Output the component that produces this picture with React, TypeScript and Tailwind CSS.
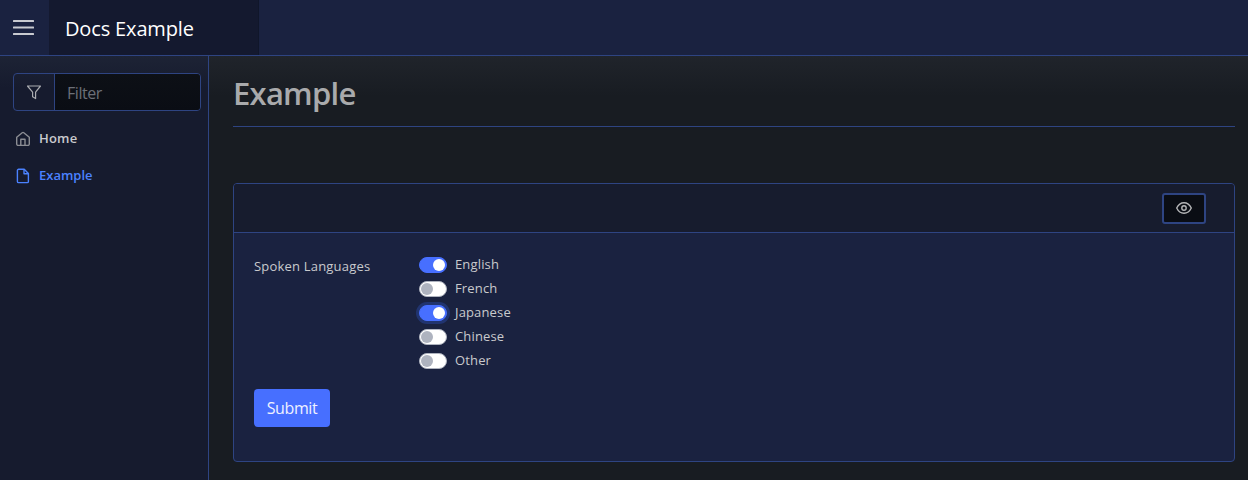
import React from "react";

const languages = [
  { name: "English", on: true, focus: false },
  { name: "French", on: false, focus: false },
  { name: "Japanese", on: true, focus: true },
  { name: "Chinese", on: false, focus: false },
  { name: "Other", on: false, focus: false },
];

const stroke = {
  fill: "none",
  stroke: "currentColor",
  strokeLinecap: "round" as const,
  strokeLinejoin: "round" as const,
};

function HomeIcon() {
  return (
    <svg className="h-4 w-4 shrink-0 text-[#8b8d93]" viewBox="0 0 16 16" {...stroke} strokeWidth="1.4">
      <path d="M1.7 6.3 7.2 1.7a1.3 1.3 0 0 1 1.6 0l5.5 4.6v6.6a1.5 1.5 0 0 1-1.5 1.5H3.2a1.5 1.5 0 0 1-1.5-1.5Z" />
      <path d="M5.8 14.4V8.2h4.2v6.2" />
    </svg>
  );
}

function FileIcon() {
  return (
    <svg className="h-4 w-4 shrink-0" viewBox="0 0 16 16" {...stroke} strokeWidth="1.4">
      <path d="M9.2 1.3H3.6a1.2 1.2 0 0 0-1.2 1.2v10.9a1.2 1.2 0 0 0 1.2 1.2h8.6a1.2 1.2 0 0 0 1.2-1.2V5.6L9.2 1.3Z" />
      <path d="M9 1.6v4.2h4.3" />
    </svg>
  );
}

function Toggle({ on, focus }: { on: boolean; focus: boolean }) {
  return (
    <span
      className={
        "flex h-4 w-7 items-center rounded-full border px-px " +
        (on ? "justify-end border-[#476fff] bg-[#476fff] " : "justify-start border-[#aeb3bf] bg-white ") +
        (focus ? "shadow-[0_0_0_3px_#21346f]" : "")
      }
    >
      <span className={"h-3 w-3 rounded-full " + (on ? "bg-white" : "bg-[#aeb3bf]")} />
    </span>
  );
}

export default function App() {
  return (
    <div className="flex h-[480px] w-[1248px] flex-col overflow-hidden bg-[#181c22] font-['Open_Sans','Noto_Sans',sans-serif] text-[#c9cacd]">
      <header className="flex h-14 shrink-0 border-b border-[#2e4482] bg-[#1a2240]">
        <button className="flex w-[49px] items-center pl-[13px]">
          <svg className="h-4 w-[21px]" viewBox="0 0 21 16" fill="#c8cad0">
            <rect y="0" width="21" height="2" rx="0.5" />
            <rect y="6.5" width="21" height="2" rx="0.5" />
            <rect y="13" width="21" height="2" rx="0.5" />
          </svg>
        </button>
        <div className="flex w-[210px] items-center border-r border-[#10162a] bg-[#14192f] pl-4 pt-[2px]">
          <span className="text-[20px] tracking-[-0.15px] text-white">Docs Example</span>
        </div>
      </header>
      <div className="flex min-h-0 flex-1">
        <aside className="w-[209px] shrink-0 border-r border-[#2e4482] bg-[#161b2e] bg-[linear-gradient(#1d2335,#161b2e_32px)] pt-[17px]">
          <div className="ml-[13px] flex h-[38px] w-[188px] overflow-hidden rounded border border-[#2e4482]">
            <div className="flex w-[41px] items-center justify-center border-r border-[#2e4482]">
              <svg className="h-4 w-4 text-[#aaacb0]" viewBox="0 0 16 16" {...stroke} strokeWidth="1.2">
                <path d="M1.5 2h13L9.6 8.1v6.5l-3-1.8V8.1Z" />
              </svg>
            </div>
            <div className="flex flex-1 items-center bg-[linear-gradient(#0d1016,#0a0d14)] pl-3 pt-[2px] text-[16px] tracking-[-0.45px] text-[#6c7078]">
              Filter
            </div>
          </div>
          <nav className="text-[13px] font-semibold">
            <a className="mt-[9px] flex h-[37px] items-center gap-2 pl-[15px]">
              <HomeIcon />
              <span className="tracking-[0.2px]">Home</span>
            </a>
            <a className="flex h-[37px] items-center gap-2 pl-[15px] text-[#4b82ff]">
              <FileIcon />
              <span>Example</span>
            </a>
          </nav>
        </aside>
        <main className="flex-1 bg-[linear-gradient(#20242b,#181c22_40px)] pl-6 pr-[13px]">
          <div className="h-[71px] border-b border-[#2e4482] pt-[12px]">
            <h1 className="text-[31px] font-semibold leading-[50px] tracking-[-0.75px] text-[#a9aaac]">Example</h1>
          </div>
          <section className="mt-14 h-[279px] overflow-hidden rounded border border-[#2e4482] bg-[#1a2240]">
            <div className="flex h-[49px] items-center justify-end border-b border-[#2e4482] bg-[#171c2e] pr-[28px]">
              <button className="flex h-[31px] w-11 items-center justify-center rounded-[3px] border-2 border-[#2e4482] bg-[#0a0d14] text-[#b5b6b8]">
                <svg className="h-4 w-4" viewBox="0 0 16 16" {...stroke} strokeWidth="1.4">
                  <path d="M.7 8C2.4 4.4 4.8 2.7 8 2.7S13.6 4.4 15.3 8C13.6 11.6 11.2 13.3 8 13.3S2.4 11.6.7 8Z" />
                  <circle cx="8" cy="8" r="2.2" />
                </svg>
              </button>
            </div>
            <div className="px-5 pt-5 text-[13px]">
              <div className="flex">
                <div className="w-[165px] pt-px leading-6 tracking-[0.2px]">Spoken Languages</div>
                <div>
                  {languages.map((l) => (
                    <label key={l.name} className="flex h-6 items-center gap-2">
                      <Toggle on={l.on} focus={l.focus} />
                      <span className="tracking-[0.15px]">{l.name}</span>
                    </label>
                  ))}
                </div>
              </div>
              <button className="mt-4 flex h-[38px] w-[76px] items-center justify-center rounded bg-[#476fff] text-[16px] tracking-[-0.4px] text-[#eef1ff]">
                Submit
              </button>
            </div>
          </section>
        </main>
      </div>
    </div>
  );
}
